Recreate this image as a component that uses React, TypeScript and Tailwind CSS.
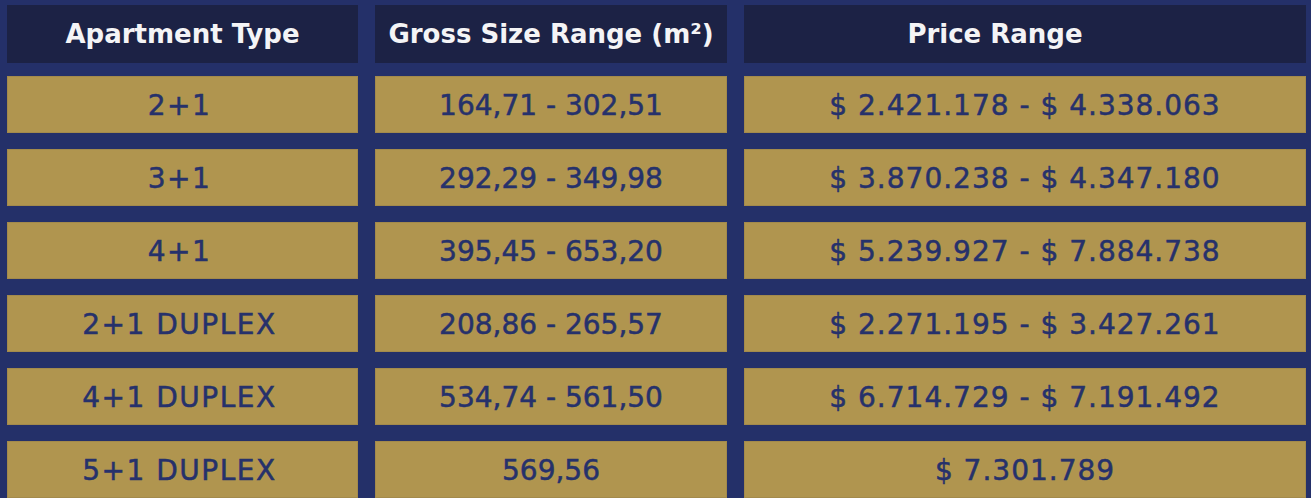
const rows = [
  { type: "2+1", size: "164,71 - 302,51", price: "$ 2.421.178 - $ 4.338.063" },
  { type: "3+1", size: "292,29 - 349,98", price: "$ 3.870.238 - $ 4.347.180" },
  { type: "4+1", size: "395,45 - 653,20", price: "$ 5.239.927 - $ 7.884.738" },
  { type: "2+1 DUPLEX", size: "208,86 - 265,57", price: "$ 2.271.195 - $ 3.427.261" },
  { type: "4+1 DUPLEX", size: "534,74 - 561,50", price: "$ 6.714.729 - $ 7.191.492" },
  { type: "5+1 DUPLEX", size: "569,56", price: "$ 7.301.789" },
];

const cell =
  "h-[57px] pt-[3px] flex items-center justify-center bg-[#b0954f] border border-[#a38a4c] text-[#26316b] text-[28px] [-webkit-text-stroke:0.5px_#26316b]";

const head =
  "h-[58px] flex items-center justify-center bg-[#1c2245] text-[#f4f4f6] text-[26px] font-bold";

export default function App() {
  return (
    <div className="w-[1311px] h-[498px] overflow-hidden bg-[#243069] pt-[5px] pl-[7px] pr-[5px] font-['DejaVu_Sans','Liberation_Sans',sans-serif]">
      {/* header row */}
      <div className="grid grid-cols-[351px_352px_562px] gap-x-[17px]">
        <div className={head}>Apartment Type</div>
        <div className={head}>Gross Size Range (m²)</div>
        <div className={head + " pr-[60px]"}>Price Range</div>
      </div>
      <div className="mt-[13px] grid grid-cols-[351px_352px_562px] gap-x-[17px] gap-y-[16px]">
        {rows.map((r) => (
          <>
            <div key={r.type + "t"} className={cell + " tracking-[1.5px] pr-[6px]"}>
              {r.type}
            </div>
            <div key={r.type + "s"} className={cell}>
              {r.size}
            </div>
            <div key={r.type + "p"} className={cell + " tracking-[1px]"}>
              {r.price}
            </div>
          </>
        ))}
      </div>
    </div>
  );
}
